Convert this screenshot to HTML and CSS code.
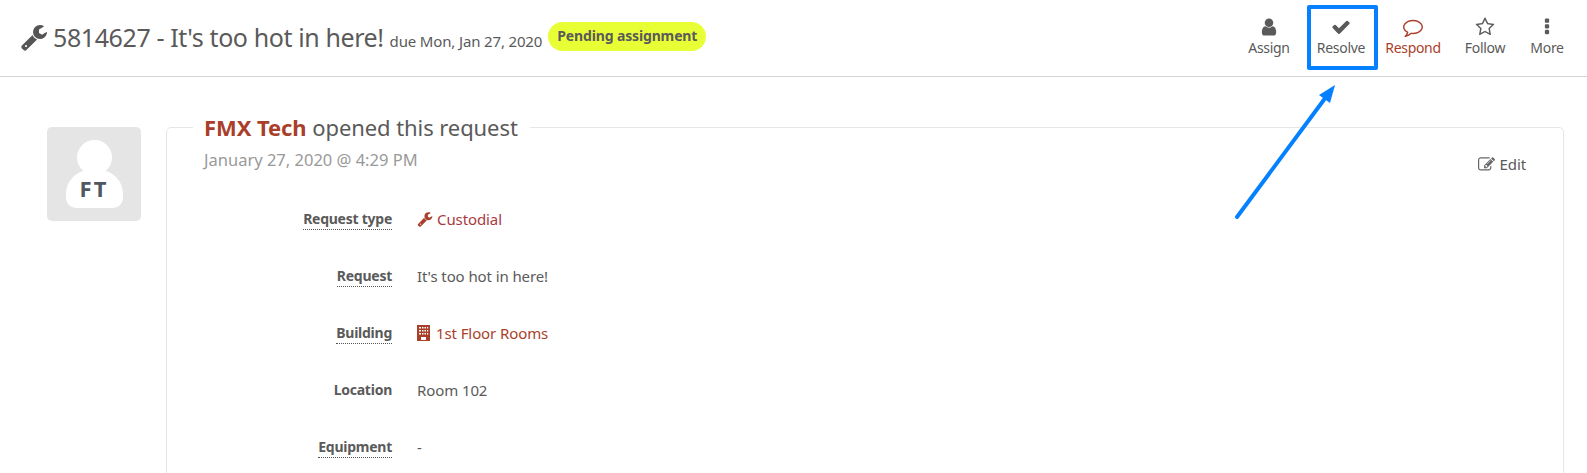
FILE: index.html
```html
<!DOCTYPE html>
<html lang="en">
<head>
<meta charset="utf-8">
<title>Request 5814627</title>
<link rel="stylesheet" href="styles.css">
</head>
<body>
<header class="topbar">
  <div class="heading">
    <svg class="wrench-lg" viewBox="0 0 1792 1792"><path d="M448 1472q0-26-19-45t-45-19-45 19-19 45 19 45 45 19 45-19 19-45zm644-420l-682 682q-37 37-90 37-52 0-91-37l-106-108q-38-36-38-90 0-53 38-91l681-681q39 98 114.5 173.5t173.5 114.5zm634-435q0 39-23 106-47 134-164.5 217.5t-258.5 83.5q-185 0-316.5-131.5t-131.5-316.5 131.5-316.5 316.5-131.5q58 0 121.5 16.5t107.5 46.5q16 11 16 28t-16 28l-293 169v224l193 107q5-3 79-48.5t135.5-81 70.5-35.5q15 0 23.5 10t8.5 25z"/></svg>
    <h1 class="title">5814627 - It's too hot in here!</h1>
    <span class="due">due Mon, Jan 27, 2020</span>
    <span class="badge">Pending assignment</span>
  </div>
  <nav class="actions">
    <a class="action"><svg viewBox="0 0 1792 1792"><path d="M1536 1399q0 109-62.5 187t-150.5 78h-854q-88 0-150.5-78t-62.5-187q0-85 8.5-160.5t31.5-152 58.5-131 94-89 134.5-34.5q131 128 313 128t313-128q76 0 134.5 34.5t94 89 58.5 131 31.5 152 8.5 160.5zm-256-887q0 159-112.5 271.5t-271.5 112.5-271.5-112.5-112.5-271.5 112.5-271.5 271.5-112.5 271.5 112.5 112.5 271.5z"/></svg><span>Assign</span></a>
    <a class="action"><svg viewBox="0 0 1792 1792"><path d="M1671 566q0 40-28 68l-724 724-136 136q-28 28-68 28t-68-28l-136-136-362-362q-28-28-28-68t28-68l136-136q28-28 68-28t68 28l294 295 656-657q28-28 68-28t68 28l136 136q28 28 28 68z"/></svg><span>Resolve</span></a>
    <a class="action a-respond"><svg viewBox="0 0 1792 1792"><path d="M896 384q-204 0-381.5 69.5t-282 187.5-104.5 255q0 112 71.5 213.5t201.5 175.5l87 50-27 96q-24 91-70 172 152-63 275-171l43-38 57 6q69 8 130 8 204 0 381.5-69.5t282-187.5 104.5-255-104.5-255-282-187.5-381.5-69.5zm896 512q0 174-120 321.5t-326 233-450 85.5q-70 0-145-8-198 175-460 242-49 14-114 22h-5q-15 0-27-10.5t-16-27.5v-1q-3-4-.5-12t2-10 4.5-9.5l6-9 7-8.5 8-9q7-8 31-34.5t34.5-38 31-39.5 32.5-51 27-59 26-76q-157-89-247.5-220t-90.5-281q0-174 120-321.5t326-233 450-85.5 450 85.5 326 233 120 321.5z"/></svg><span>Respond</span></a>
    <a class="action"><svg viewBox="0 0 1792 1792"><path d="M1201 1004l306-297-422-62-189-382-189 382-422 62 306 297-73 421 378-199 377 199zm527-357q0 22-26 48l-363 354 86 500q1 7 1 20 0 50-41 50-19 0-40-12l-449-236-449 236q-22 12-40 12-21 0-31.5-14.5t-10.5-35.5q0-6 2-20l86-500-364-354q-25-27-25-48 0-37 56-46l502-73 225-455q19-41 49-41t49 41l225 455 502 73q56 9 56 46z"/></svg><span>Follow</span></a>
    <a class="action a-more"><svg viewBox="0 0 1792 1792"><path d="M1088 1248v192q0 40-28 68t-68 28h-192q-40 0-68-28t-28-68v-192q0-40 28-68t68-28h192q40 0 68 28t28 68zm0-512v192q0 40-28 68t-68 28h-192q-40 0-68-28t-28-68v-192q0-40 28-68t68-28h192q40 0 68 28t28 68zm0-512v192q0 40-28 68t-68 28h-192q-40 0-68-28t-28-68v-192q0-40 28-68t68-28h192q40 0 68 28t28 68z"/></svg><span>More</span></a>
  </nav>
</header>

<main class="thread">
  <div class="avatar">
    <div class="avatar-head"></div>
    <div class="avatar-body">FT</div>
  </div>
  <fieldset class="card">
    <legend class="card-legend"><a class="author">FMX Tech</a> opened this request</legend>
    <div class="card-top">
      <div class="date">January 27, 2020 @ 4:29 PM</div>
      <a class="edit"><svg viewBox="0 0 1792 1792"><path d="M888 1184l116-116-152-152-116 116v56h96v96h56zm440-720q-16-16-33 1l-350 350q-17 17-1 33t33-1l350-350q17-17 1-33zm80 594v190q0 119-84.5 203.5t-203.5 84.5h-832q-119 0-203.5-84.5t-84.5-203.5v-832q0-119 84.5-203.5t203.5-84.5h832q63 0 117 25 15 7 18 23 3 17-9 29l-49 49q-14 14-32 8-23-6-45-6h-832q-66 0-113 47t-47 113v832q0 66 47 113t113 47h832q66 0 113-47t47-113v-126q0-13 9-22l64-64q15-15 35-9t20 29zm-96-738l288 288-672 672h-288v-288zm444 132l-92 92-288-288 92-92q28-28 68-28t68 28l152 152q28 28 28 68t-28 68z"/></svg>Edit</a>
    </div>
    <dl class="fields">
      <dt><span class="hint">Request type</span></dt>
      <dd><a class="link link-cat"><svg class="ico" viewBox="0 0 1792 1792"><path d="M448 1472q0-26-19-45t-45-19-45 19-19 45 19 45 45 19 45-19 19-45zm644-420l-682 682q-37 37-90 37-52 0-91-37l-106-108q-38-36-38-90 0-53 38-91l681-681q39 98 114.5 173.5t173.5 114.5zm634-435q0 39-23 106-47 134-164.5 217.5t-258.5 83.5q-185 0-316.5-131.5t-131.5-316.5 131.5-316.5 316.5-131.5q58 0 121.5 16.5t107.5 46.5q16 11 16 28t-16 28l-293 169v224l193 107q5-3 79-48.5t135.5-81 70.5-35.5q15 0 23.5 10t8.5 25z"/></svg>Custodial</a></dd>
      <dt><span class="hint">Request</span></dt>
      <dd>It's too hot in here!</dd>
      <dt><span class="hint">Building</span></dt>
      <dd><a class="link"><svg class="ico-b" viewBox="0 0 13 16"><path fill-rule="evenodd" d="M0 0h13v16H0zM2 2v1.500h2V2zm3 0v1.500h1.500V2zm2.500 0v1.500H9V2zM10 2v1.500h1.200V2zM2 5v1.500h2V5zm3 0v1.500h1.500V5zm2.500 0v1.500H9V5zM10 5v1.500h1.200V5zM2 8v1.500h2V8zm3 0v1.500h1.500V8zm2.500 0v1.500H9V8zM10 8v1.500h1.200V8zM4 12v3h5v-3z"/></svg>1st Floor Rooms</a></dd>
      <dt>Location</dt>
      <dd>Room 102</dd>
      <dt><span class="hint">Equipment</span></dt>
      <dd>-</dd>
    </dl>
  </fieldset>
</main>

<div class="callout-box"></div>
<svg class="callout-arrow" viewBox="0 0 1587 473"><line x1="1237" y1="217" x2="1326" y2="97"/><polygon points="1335,85 1319,95 1330,103"/></svg>
</body>
</html>
```

FILE: styles.css
```css
* { box-sizing: border-box; }
html, body { margin: 0; height: 473px; overflow: hidden; background: #fff; }
body { font-family: "Noto Sans", "Open Sans", sans-serif; color: #5a5a5a; font-size: 14px; position: relative; }
svg { fill: currentColor; display: block; }

.topbar { height: 77px; border-bottom: 1px solid #d4d4d4; display: flex; justify-content: space-between; align-items: flex-start; padding: 0 14px 0 22px; }
.heading { display: flex; align-items: baseline; padding-top: 21px; }
.wrench-lg { width: 28px; height: 28px; margin: 2px 5px 0 -2px; align-self: flex-start; color: #555; }
.title { margin: 0; font-weight: 400; font-size: 25px; letter-spacing: -.4px; color: #5a5a5a; line-height: 32px; }
.due { font-size: 15px; letter-spacing: -.15px; margin-left: 6px; }
.badge { margin: 1px 0 0 6px; background: #e9ff35; border-radius: 15px; font-size: 14px; font-weight: 700; padding: 3px 9px 4px; letter-spacing: -.14px; line-height: 22px; align-self: flex-start; }

.actions { display: flex; padding-top: 17px; }
.action { display: flex; flex-direction: column; align-items: center; width: 72px; color: #5a5a5a; font-size: 14px; letter-spacing: -.3px; line-height: 18px; }
.action svg { width: 20px; height: 20px; margin-bottom: 2px; }
.a-respond { color: #a93f2b; }
.a-more { width: 52px; }

.thread { display: flex; align-items: flex-start; height: 396px; overflow: hidden; padding: 50px 23px 0 47px; gap: 25px; }
.avatar { width: 94px; height: 94px; flex: none; background: #e5e5e5; border-radius: 5px; display: flex; flex-direction: column; align-items: center; padding-top: 13px; }
.avatar-head { width: 35px; height: 35px; border-radius: 50%; background: #fff; }
.avatar-body { width: 57px; height: 38px; margin-top: -5px; background: #fff; border-radius: 24px 24px 10px 10px; font-weight: 700; font-size: 22px; line-height: 36px; letter-spacing: 2px; text-align: center; color: #4f5760; }

.card { flex: 1; margin: -14px 0 0; padding: 0 37px 60px 37px; border: 1px solid #e6e6e6; border-radius: 5px; min-width: 0; }
.card-legend { margin-left: -11px; padding: 0 12px 0 11px; font-size: 22px; line-height: 28px; letter-spacing: -.08px; color: #5a5a5a; }
.author { color: #a93f2b; font-weight: 700; }
.card-top { display: flex; justify-content: space-between; margin-top: 8px; }
.date { font-size: 16.5px; line-height: 22px; color: #999; }
.edit { display: flex; align-items: center; height: 20px; margin-top: 5px; font-size: 15px; line-height: 20px; letter-spacing: -.1px; color: #5a5a5a; }
.edit svg { width: 17px; height: 17px; margin-right: 5px; color: #666; }

.fields { display: grid; grid-template-columns: 188px 1fr; grid-auto-rows: 20px; column-gap: 25px; row-gap: 37px; margin: 35px 0 0; font-size: 15px; line-height: 20px; letter-spacing: -.1px; }
.fields dt { font-weight: 700; font-size: 14px; letter-spacing: -.25px; text-align: right; }
.fields dd { margin: 0; }
.hint { border-bottom: 1px dotted #555; padding-bottom: 1px; }
.link { display: inline-flex; align-items: center; color: #a93f2b; }
.link-cat { color: #a83a3f; }
.ico { width: 16px; height: 16px; margin-right: 4px; color: #a93f2b; }
.ico-b { width: 13px; height: 16px; margin-right: 6px; }

.callout-box { position: absolute; left: 1307px; top: 5px; width: 71px; height: 65px; border: 4px solid #0580ff; border-radius: 2px; }
.callout-arrow { position: absolute; left: 0; top: 0; width: 1587px; height: 473px; pointer-events: none; fill: #0580ff; }
.callout-arrow line { stroke: #0580ff; stroke-width: 4; stroke-linecap: round; }
```
